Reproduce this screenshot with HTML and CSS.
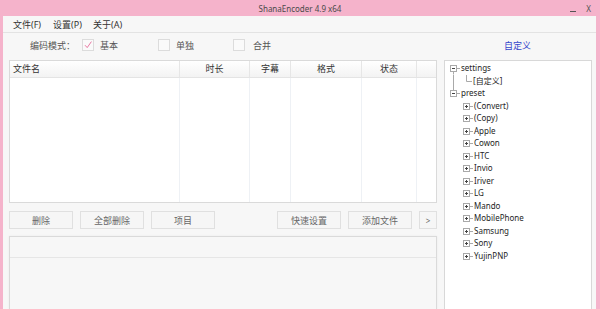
FILE: index.html
```html
<!DOCTYPE html>
<html lang="zh-CN">
<head>
<meta charset="UTF-8">
<title>ShanaEncoder 4.9 x64</title>
<link rel="stylesheet" href="styles.css">
</head>
<body>

<div class="titlebar">
    <div></div>
    <div class="title">ShanaEncoder 4.9 x64</div>
    <div class="controls"><span class="min"></span><span class="close">X</span></div>
</div>

<div class="frame">
    <div class="menubar">
        <div class="menu">文件(F)</div>
        <div class="menu">设置(P)</div>
        <div class="menu">关于(A)</div>
    </div>

    <div class="modebar">
        <div class="mode-label">编码模式：</div>
        <div class="opt opt1">
            <span class="box">
                <svg width="12" height="12" viewBox="0 0 12 12"><path d="M3 6.2 L5.2 8.6 L9.4 2.6" fill="none" stroke="#e66a98" stroke-width="0.9"/></svg>
            </span>
            <span>基本</span>
        </div>
        <div class="opt opt2"><span class="box"></span><span>单独</span></div>
        <div class="opt opt3"><span class="box"></span><span>合并</span></div>
        <a class="custom">自定义</a>
    </div>

    <div class="main">
        <div class="left">
            <div class="list">
                <div class="cols head">
                    <div class="c name">文件名</div>
                    <div class="c">时长</div>
                    <div class="c">字幕</div>
                    <div class="c">格式</div>
                    <div class="c">状态</div>
                    <div class="c"></div>
                </div>
                <div class="cols body">
                    <div class="c"></div>
                    <div class="c"></div>
                    <div class="c"></div>
                    <div class="c"></div>
                    <div class="c"></div>
                    <div class="c"></div>
                </div>
            </div>

            <div class="buttons">
                <button>删除</button>
                <button>全部删除</button>
                <button>项目</button>
                <div class="spacer"></div>
                <button>快速设置</button>
                <button>添加文件</button>
                <button class="more">&gt;</button>
            </div>

            <div class="log">
                <div class="log-head"></div>
            </div>
        </div>

        <div class="tree">
            <div class="row">
                <svg width="16" height="12.5" viewBox="0 0 16 12.5">
                    <rect x="5.5" y="3.5" width="6" height="6" fill="#fff" stroke="#a9a9a9"/>
                    <path d="M7 6.5 H10" stroke="#444"/>
                    <path d="M8.5 9.5 V12.5 M11.5 6.5 H15" stroke="#a9a9a9"/>
                </svg>
                <span>settings</span>
            </div>
            <div class="row">
                <svg width="28" height="12.5" viewBox="0 0 28 12.5">
                    <path d="M8.5 0 V12.5" stroke="#a9a9a9"/>
                    <path d="M21.5 0 V6.5 H27" fill="none" stroke="#a9a9a9"/>
                </svg>
                <span>[自定义]</span>
            </div>
            <div class="row">
                <svg width="16" height="12.5" viewBox="0 0 16 12.5">
                    <path d="M8.5 0 V3.5 M11.5 6.5 H15" stroke="#a9a9a9"/>
                    <rect x="5.5" y="3.5" width="6" height="6" fill="#fff" stroke="#a9a9a9"/>
                    <path d="M7 6.5 H10" stroke="#444"/>
                </svg>
                <span>preset</span>
            </div>
            <div id="presets"></div>
        </div>
    </div>
</div>

<script>
    const presets = ['(Convert)', '(Copy)', 'Apple', 'Cowon', 'HTC', 'Invio', 'Iriver',
        'LG', 'Mando', 'MobilePhone', 'Samsung', 'Sony', 'YujinPNP'];
    const presetsEl = document.getElementById('presets');

    presets.forEach(name => {
        const row = document.createElement('div');
        row.className = 'row';
        row.innerHTML = `<svg width="29" height="12.5" viewBox="0 0 29 12.5">
                <path d="M24.5 6.5 H28" stroke="#a9a9a9"/>
                <rect x="18.5" y="3.5" width="6" height="6" fill="#fff" stroke="#a9a9a9"/>
                <path d="M20 6.5 H23 M21.5 5 V8" stroke="#444"/>
            </svg><span>${name}</span>`;
        presetsEl.appendChild(row);
    });
</script>

</body>
</html>
```

FILE: styles.css
```css
:root {
    --pink: #f5b3cb;
    --bg: #f7f7f7;
    --line: #dadada;
    --text: #333;
}

* {
    box-sizing: border-box;
}

body {
    margin: 0;
    width: 600px;
    height: 309px;
    overflow: hidden;
    background: var(--pink);
    font-family: "Noto Sans", "Noto Sans CJK SC", sans-serif;
    font-size: 9px;
    color: var(--text);
}

.titlebar {
    height: 16px;
    display: grid;
    grid-template-columns: 1fr auto 1fr;
    align-items: center;
}

.title {
    color: #4a4a4a;
    font-size: 8px;
    padding-top: 1px;
}

.controls {
    display: flex;
    justify-content: flex-end;
    align-items: center;
    gap: 10px;
    padding-right: 9px;
    color: #555;
    font-size: 8px;
}

.controls .min {
    width: 6px;
    height: 1px;
    margin-top: 7px;
    background: #555;
}

.frame {
    margin: 0 4px 0 3px;
    height: 293px;
    background: var(--bg);
    display: flex;
    flex-direction: column;
}

.menubar {
    height: 17px;
    border-bottom: 1px solid #e3e3e3;
    padding-left: 10px;
    display: flex;
    align-items: center;
}

.menu {
    width: 40px;
}

.modebar {
    height: 27px;
    padding: 0 0 3px 27px;
    display: flex;
    align-items: center;
    color: #555;
}

.mode-label {
    width: 52px;
}

.opt {
    display: flex;
    align-items: center;
    gap: 6px;
}

.opt1 { width: 76px; }
.opt2 { width: 75px; }
.opt3 { width: 271px; }
.opt3 .box { margin-right: 2px; }

.box {
    width: 12px;
    height: 12px;
    border: 1px solid #dcdcdc;
    background: #fafafa;
    display: flex;
}

.box svg {
    margin: -1px;
}

.custom {
    color: #3446cc;
}

.main {
    flex: 1;
    min-height: 0;
    display: flex;
}

.left {
    margin-left: 6px;
    width: 428px;
    display: flex;
    flex-direction: column;
}

.list {
    height: 143px;
    border: 1px solid var(--line);
    background: #fff;
    display: flex;
    flex-direction: column;
}

.cols {
    display: grid;
    grid-template-columns: 170px 70px 41px 71px 55px 1fr;
}

.head {
    height: 17px;
    background: linear-gradient(#ffffff, #f3f3f3);
    border-bottom: 1px solid #e4e4e4;
}

.head .c {
    border-right: 1px solid #e6e6e6;
    text-align: center;
    line-height: 16px;
    color: #333;
}

.head .name {
    text-align: left;
    padding-left: 3px;
}

.body {
    flex: 1;
}

.body .c {
    border-right: 1px solid #eef1f5;
}

.head .c:last-child,
.body .c:last-child {
    border-right: none;
}

.buttons {
    margin-top: 8px;
    height: 18px;
    display: flex;
    gap: 7px;
}

.spacer {
    flex: 1;
}

button {
    width: 64px;
    height: 18px;
    padding: 0;
    border: 1px solid #e0e0e0;
    background: #f6f6f6;
    color: #666;
    font-family: inherit;
    font-size: 9px;
}

button.more {
    width: 18px;
    font-size: 8px;
}

.log {
    margin-top: 7px;
    flex: 1;
    border: 1px solid var(--line);
    border-bottom: none;
    background: #f7f7f7;
    box-shadow: 0 0 2px rgba(0, 0, 0, 0.06);
}

.log-head {
    height: 21px;
    border-bottom: 1px solid #e6e6e6;
}

.tree {
    margin-left: 7px;
    width: 148px;
    height: 260px;
    border: 1px solid #d8d8d8;
    background: #fff;
    padding-top: 1px;
    color: #1e1e1e;
    font-size: 8px;
}

.row {
    height: 12.5px;
    display: flex;
    align-items: center;
    line-height: 12.5px;
}

.row svg {
    flex: none;
    display: block;
}
```
